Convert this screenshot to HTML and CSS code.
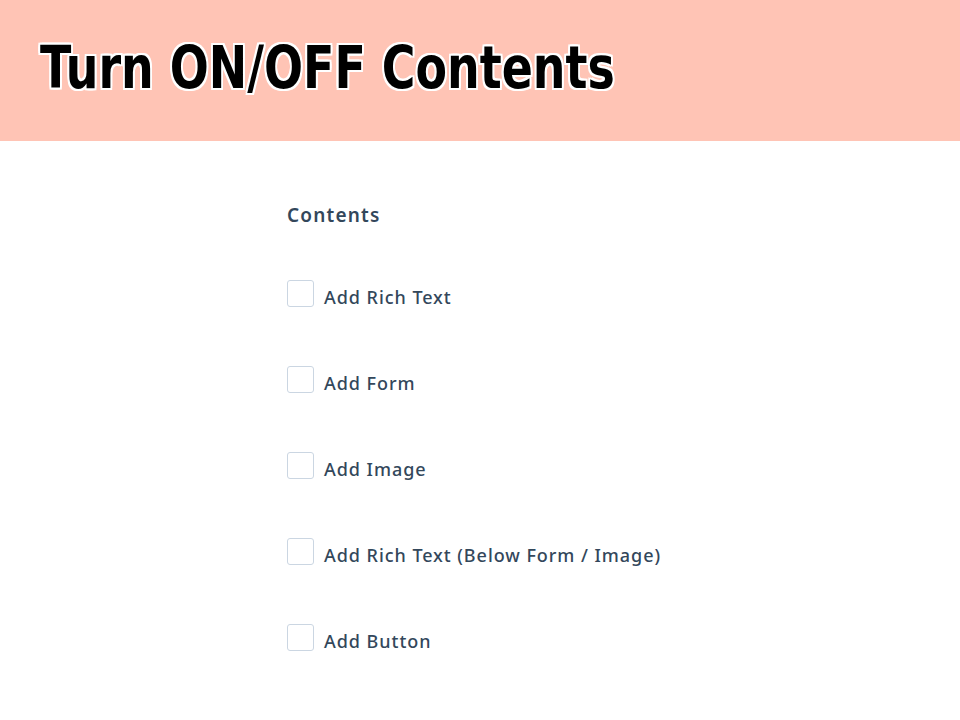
FILE: index.html
```html
<!DOCTYPE html>
<html lang="en">
<head>
  <meta charset="UTF-8">
  <title>Turn ON/OFF Contents</title>
  <link rel="stylesheet" href="styles.css">
</head>
<body>
  <div class="banner">
    <h1 class="banner-title">Turn ON/OFF Contents</h1>
  </div>
  <div class="panel">
    <div class="panel-heading">Contents</div>
    <label class="option"><span class="box"></span>Add Rich Text</label>
    <label class="option"><span class="box"></span>Add Form</label>
    <label class="option"><span class="box"></span>Add Image</label>
    <label class="option"><span class="box"></span>Add Rich Text (Below Form / Image)</label>
    <label class="option"><span class="box"></span>Add Button</label>
  </div>
</body>
</html>
```

FILE: styles.css
```css
body {
  margin: 0;
  background: #ffffff;
  font-family: 'Noto Sans', sans-serif;
}
.banner {
  background-color: #ffc4b5;
  height: 141px;
  display: flex;
  align-items: center;
  padding-left: 40px;
}
.banner-title {
  margin: -6px 0 0;
  font-family: 'DejaVu Sans Condensed', 'DejaVu Sans', sans-serif;
  font-stretch: condensed;
  font-weight: 700;
  font-size: 58px;
  color: #000;
  white-space: nowrap;
  transform: scaleX(0.88);
  transform-origin: left center;
  text-shadow:
    -2px -2px 0 #fff, 2px -2px 0 #fff, -2px 2px 0 #fff, 2px 2px 0 #fff,
    0 -2px 0 #fff, 0 2px 0 #fff, -2px 0 0 #fff, 2px 0 0 #fff;
}
.panel {
  padding: 61px 0 0 287px;
  display: flex;
  flex-direction: column;
}
.panel-heading {
  font-size: 19px;
  font-weight: 600;
  letter-spacing: 1.2px;
  color: #33475b;
  margin-bottom: 55px;
}
.option {
  display: flex;
  align-items: center;
  gap: 10px;
  height: 27px;
  line-height: 1;
  margin-bottom: 59px;
  font-size: 18px;
  font-weight: 500;
  letter-spacing: 0.95px;
  color: #33475b;
}
.box {
  flex: none;
  width: 25px;
  height: 25px;
  border: 1px solid #cbd6e2;
  border-radius: 3px;
  background: #fff;
  margin-top: -6px;
}
```
